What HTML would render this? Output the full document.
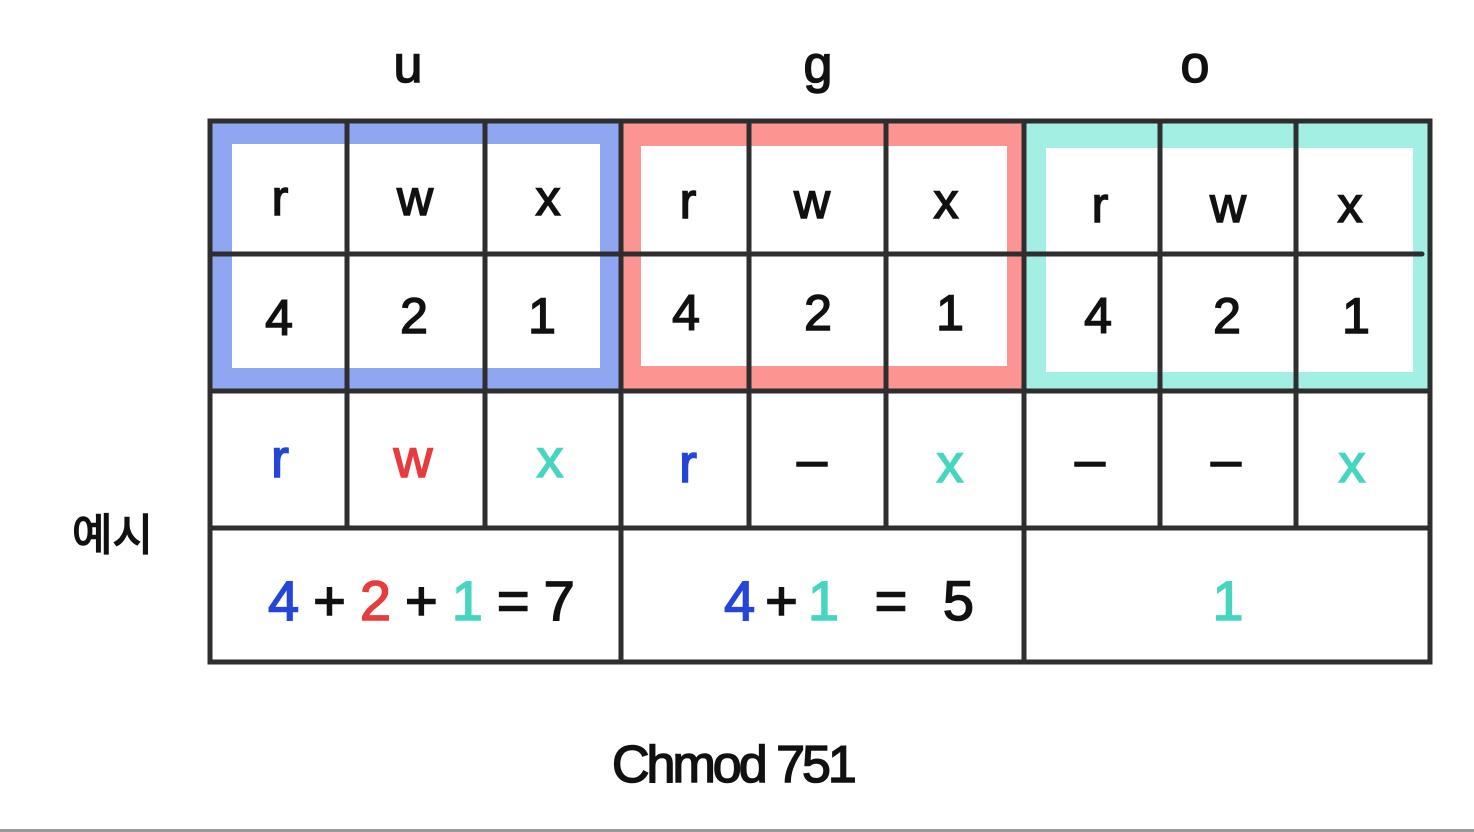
<!DOCTYPE html>
<html><head><meta charset="utf-8">
<style>
html,body{margin:0;padding:0;background:#fff;}
body{width:1474px;height:832px;overflow:hidden;position:relative;}
svg{position:absolute;left:0;top:0;}
text{font-family:"Liberation Sans","Noto Sans CJK KR",sans-serif;stroke-width:1.5;}
</style></head>
<body>
<svg width="1474" height="832" viewBox="0 0 1474 832">
  <rect x="210" y="120" width="411" height="271" fill="#8fa6f1"/>
  <rect x="232" y="144" width="368" height="224" fill="#fff"/>
  <rect x="621" y="120" width="403" height="271" fill="#fc9591"/>
  <rect x="641" y="146" width="366" height="220" fill="#fff"/>
  <rect x="1024" y="120" width="406" height="271" fill="#a3efe4"/>
  <rect x="1046" y="148" width="367" height="224" fill="#fff"/>
  <g stroke="#2e2e2e" stroke-width="5" fill="none" stroke-linecap="round">
    <rect x="210" y="121" width="1220" height="541"/>
    <line x1="213" y1="254" x2="1422" y2="254"/>
    <line x1="210" y1="391" x2="1430" y2="391"/>
    <line x1="210" y1="528" x2="1430" y2="528"/>
    <line x1="347" y1="121" x2="347" y2="528"/>
    <line x1="485" y1="121" x2="485" y2="528"/>
    <line x1="621" y1="121" x2="621" y2="662"/>
    <line x1="749" y1="121" x2="749" y2="528"/>
    <line x1="886" y1="121" x2="886" y2="528"/>
    <line x1="1024" y1="121" x2="1024" y2="662"/>
    <line x1="1160" y1="121" x2="1160" y2="528"/>
    <line x1="1296" y1="121" x2="1296" y2="528"/>
  </g>
  <g font-size="52" fill="#111" stroke="#111" text-anchor="middle">
    <text x="408" y="82">u</text>
    <text x="818" y="82">g</text>
    <text x="1195" y="82">o</text>
  </g>
  <g font-size="50" fill="#111" stroke="#111" text-anchor="middle">
    <text x="280" y="215">r</text><text x="415" y="215">w</text><text x="548" y="215">x</text>
    <text x="688" y="218">r</text><text x="812" y="218">w</text><text x="946" y="218">x</text>
    <text x="1100" y="222">r</text><text x="1228" y="222">w</text><text x="1350" y="222">x</text>
    <text x="279" y="335">4</text><text x="414" y="333">2</text><text x="542" y="333">1</text>
    <text x="686" y="330">4</text><text x="818" y="330">2</text><text x="950" y="330">1</text>
    <text x="1098" y="333">4</text><text x="1227" y="333">2</text><text x="1356" y="333">1</text>
  </g>
  <g font-size="54" text-anchor="middle">
    <text x="280" y="477" fill="#2446d8" stroke="#2446d8">r</text>
    <text x="413" y="477" fill="#e83b3b" stroke="#e83b3b">w</text>
    <text x="550" y="477" fill="#46d6c0" stroke="#46d6c0">x</text>
    <text x="688" y="482" fill="#2446d8" stroke="#2446d8">r</text>
    <text x="812" y="478" fill="#111" stroke="#111">–</text>
    <text x="950" y="482" fill="#46d6c0" stroke="#46d6c0">x</text>
    <text x="1090" y="478" fill="#111" stroke="#111">–</text>
    <text x="1226" y="478" fill="#111" stroke="#111">–</text>
    <text x="1352" y="482" fill="#46d6c0" stroke="#46d6c0">x</text>
  </g>
  <g font-size="56">
    <text x="268" y="620" letter-spacing="14"><tspan fill="#2446d8" stroke="#2446d8">4</tspan><tspan fill="#111" stroke="#111">+</tspan><tspan fill="#e83b3b" stroke="#e83b3b">2</tspan><tspan fill="#111" stroke="#111">+</tspan><tspan fill="#46d6c0" stroke="#46d6c0">1</tspan><tspan fill="#111" stroke="#111">=7</tspan></text>
    <text x="724" y="620" letter-spacing="10"><tspan fill="#2446d8" stroke="#2446d8">4</tspan><tspan fill="#111" stroke="#111">+</tspan><tspan fill="#46d6c0" stroke="#46d6c0">1</tspan><tspan fill="#111" stroke="#111"> = 5</tspan></text>
    <text x="1228" y="620" fill="#46d6c0" stroke="#46d6c0" text-anchor="middle">1</text>
  </g>
  <text x="72" y="550" font-size="44" fill="#111" stroke="#111">예시</text>
  <text x="612" y="782" font-size="52" fill="#111" stroke="#111" letter-spacing="-3">Chmod 751</text>
  <rect x="0" y="829" width="1474" height="3" fill="#999"/>
</svg>
</body></html>
